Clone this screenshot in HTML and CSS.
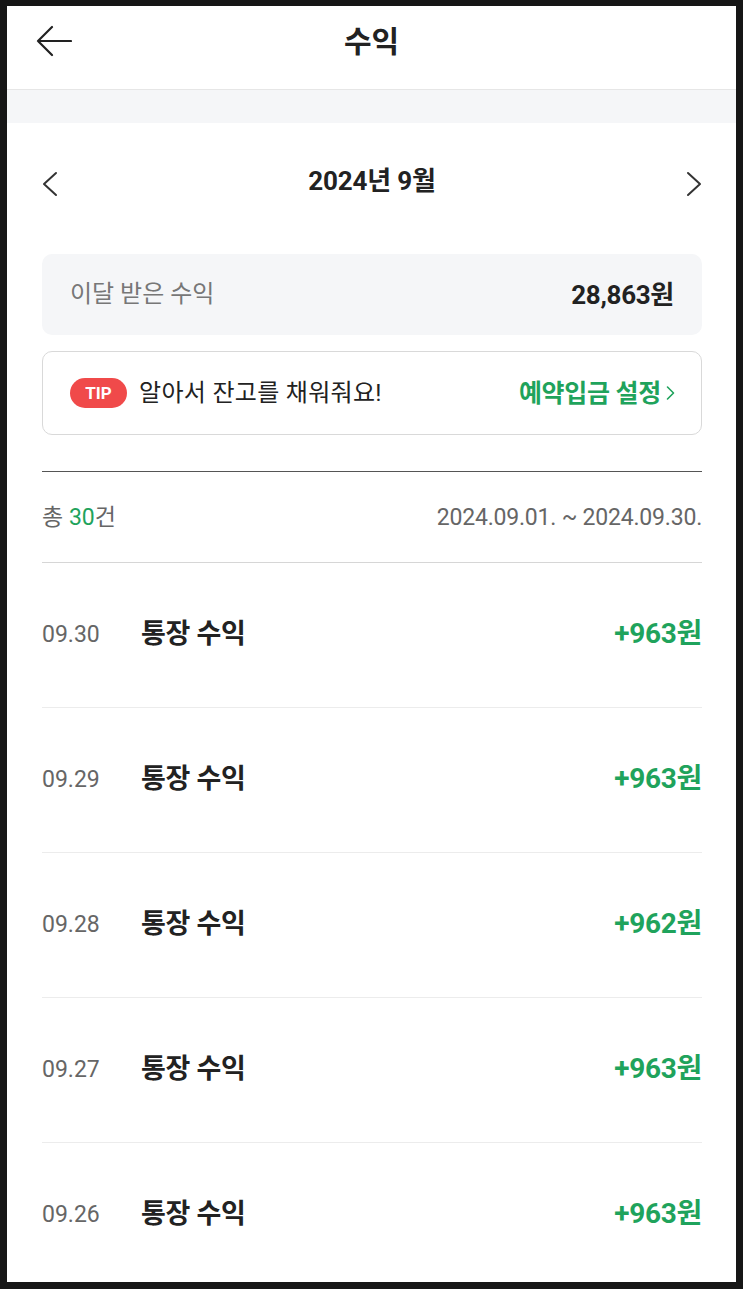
FILE: index.html
```html
<!DOCTYPE html>
<html lang="ko">
<head>
<meta charset="utf-8">
<title>수익</title>
<link rel="stylesheet" href="styles.css">
</head>
<body>
<div class="app">
  <header class="topbar">
    <button class="back" aria-label="뒤로">
      <svg width="36" height="32" viewBox="0 0 36 32"><path d="M16 2 L2 16 L16 30 M2 16 H35" fill="none" stroke="#222" stroke-width="2.2" stroke-linecap="round" stroke-linejoin="round"/></svg>
    </button>
    <h1 class="title">수익</h1>
  </header>
  <div class="band"></div>

  <main class="content">
    <div class="month-nav">
      <svg class="chev" width="16" height="26" viewBox="0 0 16 26"><path d="M14 2 L2 13 L14 24" fill="none" stroke="#333" stroke-width="2" stroke-linecap="round" stroke-linejoin="round"/></svg>
      <span class="month">2024년 9월</span>
      <svg class="chev" width="16" height="26" viewBox="0 0 16 26"><path d="M2 2 L14 13 L2 24" fill="none" stroke="#333" stroke-width="2" stroke-linecap="round" stroke-linejoin="round"/></svg>
    </div>

    <div class="summary">
      <span class="summary-label">이달 받은 수익</span>
      <span class="summary-value">28,863원</span>
    </div>

    <div class="tip">
      <div class="tip-left">
        <span class="tip-badge">TIP</span>
        <span class="tip-text">알아서 잔고를 채워줘요!</span>
      </div>
      <span class="tip-link">예약입금 설정<svg width="9" height="16" viewBox="0 0 9 16"><path d="M1.5 2 L7.5 8 L1.5 14" fill="none" stroke="#1fa35c" stroke-width="1.6" stroke-linecap="round" stroke-linejoin="round"/></svg></span>
    </div>

    <div class="count-row">
      <span class="count">총 <em>30</em>건</span>
      <span class="range">2024.09.01. ~ 2024.09.30.</span>
    </div>

    <ul class="list">
      <li class="item"><span class="date">09.30</span><span class="name">통장 수익</span><span class="amount">+963원</span></li>
      <li class="item"><span class="date">09.29</span><span class="name">통장 수익</span><span class="amount">+963원</span></li>
      <li class="item"><span class="date">09.28</span><span class="name">통장 수익</span><span class="amount">+962원</span></li>
      <li class="item"><span class="date">09.27</span><span class="name">통장 수익</span><span class="amount">+963원</span></li>
      <li class="item"><span class="date">09.26</span><span class="name">통장 수익</span><span class="amount">+963원</span></li>
    </ul>
  </main>
</div>
</body>
</html>
```

FILE: styles.css
```css
* { box-sizing: border-box; }
html, body { margin: 0; padding: 0; }
body {
  background: #161616;
  font-family: Roboto, "Noto Sans CJK KR", "Noto Sans", sans-serif;
  color: #222;
}
.app {
  margin: 6px 7px 7px 7px;
  height: 1276px;
  background: #fff;
  overflow: hidden;
}
.topbar {
  height: 84px;
  border-bottom: 1px solid #e6e6e6;
  display: flex;
  align-items: center;
  justify-content: center;
  position: relative;
}
.back {
  position: absolute;
  left: 29px;
  top: 19px;
  padding: 0;
  border: 0;
  background: none;
  display: flex;
}
.title {
  margin: 0;
  font-size: 30px;
  font-weight: 700;
  line-height: 1;
  margin-top: -12px;
  color: #222;
}
.band {
  height: 33px;
  background: #f5f6f8;
}
.content {
  padding: 0 34px 0 35px;
}
.month-nav {
  height: 116px;
  display: flex;
  align-items: center;
  justify-content: space-between;
}
.chev { margin-top: 6px; }
.month {
  font-size: 26px;
  font-weight: 700;
  letter-spacing: -0.2px;
  line-height: 1;
  margin-top: 0;
  color: #222;
}
.summary {
  margin-top: 15px;
  height: 81px;
  background: #f5f6f8;
  border-radius: 10px;
  display: flex;
  align-items: center;
  justify-content: space-between;
  padding: 0 28px;
}
.summary-label {
  font-size: 24px;
  color: #777;
  line-height: 1;
  margin-top: -2px;
}
.summary-value {
  font-size: 26px;
  font-weight: 700;
  color: #222;
  letter-spacing: -0.3px;
  line-height: 1;
}
.tip {
  margin-top: 16px;
  height: 84px;
  border: 1px solid #d9d9d9;
  border-radius: 10px;
  display: flex;
  align-items: center;
  justify-content: space-between;
  padding: 0 26px 0 27px;
}
.tip-left {
  display: flex;
  align-items: center;
  gap: 12px;
}
.tip-badge {
  display: inline-flex;
  align-items: center;
  justify-content: center;
  width: 57px;
  height: 30px;
  border-radius: 15px;
  background: #f04a4a;
  color: #fff;
  font-size: 17px;
  font-weight: 700;
}
.tip-text {
  font-size: 24px;
  color: #222;
  line-height: 1;
  letter-spacing: 0.3px;
}
.tip-link {
  display: inline-flex;
  align-items: center;
  gap: 5px;
  font-size: 25px;
  font-weight: 700;
  color: #1fa35c;
  line-height: 1;
  letter-spacing: -0.3px;
}
.count-row {
  margin-top: 36px;
  border-top: 1px solid #555;
  border-bottom: 1px solid #d6d6d6;
  height: 92px;
  display: flex;
  align-items: center;
  justify-content: space-between;
}
.count {
  font-size: 23px;
  color: #666;
  line-height: 1;
}
.count em {
  font-style: normal;
  color: #1fa35c;
}
.range {
  font-size: 23px;
  color: #666;
  letter-spacing: -0.2px;
  line-height: 1;
}
.list {
  list-style: none;
  margin: 0;
  padding: 0;
}
.item {
  height: 145px;
  border-bottom: 1px solid #ececec;
  display: flex;
  align-items: center;
  padding-bottom: 2px;
}
.date {
  width: 99px;
  font-size: 23px;
  color: #666;
  line-height: 1;
}
.name {
  flex: 1;
  font-size: 27px;
  font-weight: 700;
  color: #222;
  letter-spacing: -0.3px;
  line-height: 1;
}
.amount {
  font-size: 28px;
  font-weight: 700;
  color: #1fa35c;
  letter-spacing: -0.3px;
  line-height: 1;
}
```
